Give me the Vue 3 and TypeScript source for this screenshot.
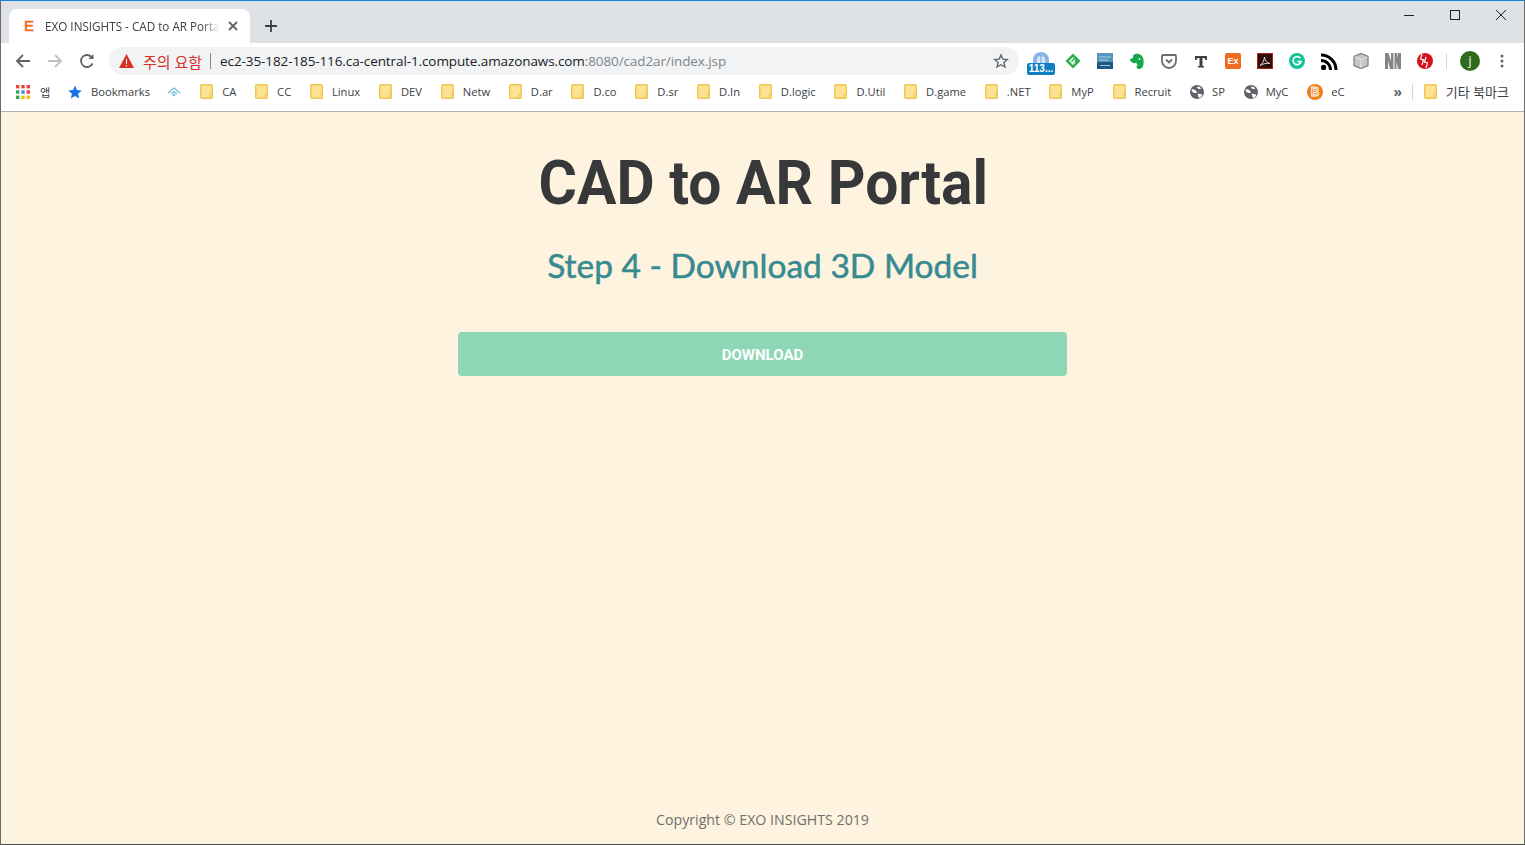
<template>
  <div class="window">
    <div class="tabstrip">
      <div class="tab">
        <span class="favicon">E</span>
        <span class="tab-title">EXO INSIGHTS - CAD to AR Porta</span>
        <svg class="tab-close" width="10" height="10" viewBox="0 0 10 10"><path d="M1 1l8 8M9 1l-8 8" stroke="#5f6368" stroke-width="1.8" /></svg>
      </div>
      <svg class="new-tab" width="12" height="12" viewBox="0 0 12 12"><path d="M6 0v12M0 6h12" stroke="#3c4043" stroke-width="1.8" /></svg>
      <div class="win-controls">
        <svg width="12" height="12" viewBox="0 0 12 12"><path d="M1 6.500h10" stroke="#222" /></svg>
        <svg width="12" height="12" viewBox="0 0 12 12"><rect x="1.500" y="1.500" width="9" height="9" fill="none" stroke="#222" /></svg>
        <svg width="12" height="12" viewBox="0 0 12 12"><path d="M1 1l10 10M11 1L1 11" stroke="#222" /></svg>
      </div>
    </div>

    <div class="toolbar">
      <svg class="nav" width="16" height="16" viewBox="0 0 16 16"><path d="M15 8H2M8 2L2 8l6 6" fill="none" stroke="#5f6368" stroke-width="1.8" /></svg>
      <svg class="nav" width="16" height="16" viewBox="0 0 16 16"><path d="M1 8h13M8 2l6 6-6 6" fill="none" stroke="#bdc1c6" stroke-width="1.8" /></svg>
      <svg class="nav" width="16" height="16" viewBox="0 0 16 16"><path d="M13.500 10.500A6 6 0 1 1 13 4.600" fill="none" stroke="#5f6368" stroke-width="1.8" /><path d="M14.500 1v5h-5z" fill="#5f6368" /></svg>
      <div class="omnibox">
        <svg width="15" height="14" viewBox="0 0 15 14"><path d="M7.500 0L15 14H0z" fill="#d93025" /><path d="M7 5h1v5H7zM7 11h1v1.400H7z" fill="#fff" /></svg>
        <span class="warn">주의 요함</span>
        <span class="omni-sep"></span>
        <span class="url">ec2-35-182-185-116.ca-central-1.compute.amazonaws.com<span class="url-dim">:8080/cad2ar/index.jsp</span></span>
        <svg class="star" width="16" height="16" viewBox="0 0 24 24"><path d="M12 3l2.700 6.200 6.800.6-5.100 4.500 1.500 6.700L12 17.500 6.100 21l1.500-6.700L2.500 9.800l6.800-.6z" fill="none" stroke="#5f6368" stroke-width="2" /></svg>
      </div>
      <div class="extensions">
        <div class="ext">
          <svg width="28" height="26" viewBox="0 0 28 26">
            <path d="M6 18V12a8 8 0 0 1 16 0v6z" fill="#8ab4e8" /><path d="M10 18v-6a4 4 0 0 1 8 0v6z" fill="#dce8f8" /><path d="M14 8v7" stroke="#6f9bd6" />
          </svg>
          <span class="badge">113...</span>
        </div>
        <div class="ext">
          <svg width="16" height="16" viewBox="0 0 16 16"><path d="M8 .5L15.500 8 8 15.500.5 8z" fill="#2bb24c" /><path d="M8.500 4.500L5 8l3.500 3.500M10 7L7.500 9.500M10 9.500L9 10.500" fill="none" stroke="#fff" stroke-width="1.400" /></svg>
        </div>
        <div class="ext">
          <svg width="16" height="16" viewBox="0 0 16 16"><rect width="16" height="16" fill="#5a93bd" /><rect y="9" width="16" height="7" fill="#1d5a88" /><path d="M2 4h12M2 7h9M3 12.500h10" stroke="#c4dcec" stroke-width=".8" /></svg>
        </div>
        <div class="ext">
          <svg width="16" height="17" viewBox="0 0 16 17"><path d="M1 6l3-1V2.500L6 1c2-.5 5 0 6.500 1.500C14.500 4.500 15 8 14.500 11c-.4 2.500-1.500 5-4.500 5-1.500 0-2.500-1-2.500-2.200 0-1.200 1-1.800 2-1.500-1.500-.5-2-1.500-2-2.800-1 1-3 1-4.500 0C2 8.500 1 7.500 1 6z" fill="#14a84a" /><circle cx="10.500" cy="6" r=".9" fill="#fff" /></svg>
        </div>
        <div class="ext">
          <svg width="16" height="16" viewBox="0 0 16 16"><path d="M2 2h12a1 1 0 0 1 1 1v5a7 7 0 0 1-14 0V3a1 1 0 0 1 1-1z" fill="none" stroke="#6e6e6e" stroke-width="1.800" /><path d="M5 6.500L8 9.500l3-3" fill="none" stroke="#6e6e6e" stroke-width="1.800" /></svg>
        </div>
        <div class="ext">
          <svg width="14" height="13" viewBox="0 0 14 13"><path d="M1 1h12v4h-1.500L10.500 3H8.500v8H10v1.500H4V11h1.500V3h-2L2.500 5H1z" fill="#3c4043" /></svg>
        </div>
        <div class="ext">
          <span class="ex-icon">Ex</span>
        </div>
        <div class="ext">
          <svg width="16" height="16" viewBox="0 0 16 16"><rect x=".5" y=".5" width="15" height="15" fill="#2a0f0c" stroke="#b5200f" /><path d="M3 12.500c2-1 4-4.500 4.500-8.500 .5 3.500 2 6 5.500 6.500-3-.5-6.500 0-10 2z" fill="none" stroke="#e9d5d2" /></svg>
        </div>
        <div class="ext">
          <svg width="16" height="16" viewBox="0 0 16 16"><circle cx="8" cy="8" r="8" fill="#15c39a" /><path d="M11.300 5.200A4 4 0 1 0 12 8.500H8.500" fill="none" stroke="#fff" stroke-width="1.600" /></svg>
        </div>
        <div class="ext">
          <svg width="17" height="17" viewBox="0 0 17 17"><circle cx="2.600" cy="14.400" r="2.600" /><path d="M0 7.500a9.500 9.500 0 0 1 9.500 9.500M0 2a15 15 0 0 1 15 15" fill="none" stroke="#000" stroke-width="3" /></svg>
        </div>
        <div class="ext">
          <svg width="16" height="16" viewBox="0 0 16 16"><path d="M8 .5L15 3.500v9L8 15.500 1 12.500v-9z" fill="#c6c6c6" stroke="#7a7a7a" stroke-width="1.200" /><path d="M1.500 4L8 6.500 14.500 4M8 6.500V15" fill="none" stroke="#e8e8e8" /></svg>
        </div>
        <div class="ext">
          <svg width="16" height="16" viewBox="0 0 16 16"><path d="M0 0h3.500L6 8V0h2.500v16H5L3 8v8H0zM9.500 0h2.500L13 5V0h3v16h-3l-1.500-7v7h-2z" fill="#868686" /></svg>
        </div>
        <div class="ext">
          <svg width="16" height="16" viewBox="0 0 16 16"><circle cx="8" cy="8" r="8" fill="#d3121c" /><path d="M5 1L3.500 6l3 1L5 12M9 4L7.500 9l3 1L9 15" fill="none" stroke="#fff" stroke-width="1.200" /></svg>
        </div>
        <span class="ext-sep"></span>
        <span class="avatar">j</span>
        <svg class="menu" width="4" height="14" viewBox="0 0 4 14"><circle cx="2" cy="2" r="1.500" fill="#5f6368" /><circle cx="2" cy="7" r="1.500" fill="#5f6368" /><circle cx="2" cy="12" r="1.500" fill="#5f6368" /></svg>
      </div>
    </div>

    <div class="bookmarks">
      <svg class="apps" width="14" height="14" viewBox="0 0 14 14">
        <rect v-for="dot in appDots" :key="dot.x + '-' + dot.y" :x="dot.x" :y="dot.y" width="3.400" height="3.400" :fill="dot.color" />
      </svg>
      <span class="bm-text apps-label">앱</span>
      <svg class="bm-star" width="14" height="14" viewBox="0 0 24 24"><path d="M12 1l3.300 7.700 8.300.7-6.300 5.500 1.900 8.100L12 18.700 4.800 23l1.900-8.100L.4 9.400l8.300-.7z" fill="#1a73e8" /></svg>
      <span class="bm-text bm-named">Bookmarks</span>
      <svg class="bm-cloud" width="14" height="10" viewBox="0 0 14 10"><path d="M1 6l6-5 6 5M4 7l3-2.500L10 7" fill="none" stroke="#6db9d6" stroke-width="1.300" /><circle cx="7" cy="8" r="1.300" fill="#6db9d6" /></svg>
      <div class="bm-item" v-for="bm in bookmarks" :key="bm.label">
        <svg v-if="bm.icon === 'folder'" width="14" height="15" viewBox="0 0 14 15"><rect x=".75" y=".75" width="11.500" height="13.500" rx="1" fill="#fde293" stroke="#efc74e" stroke-width="1.500" /><rect x="10" y="11" width="2.500" height="3" fill="#fde293" stroke="#efc74e" /></svg>
        <svg v-else-if="bm.icon === 'globe'" width="14" height="14" viewBox="0 0 14 14"><circle cx="7" cy="7" r="7" fill="#5f6368" /><path d="M1.500 4.500C4 3.500 6 5 7 7.500 5.500 8.500 3.500 8 2 6.500zM7.500 9c2-.5 3.500 0 5 1-1 1.500-2 2.500-3.500 3zM7.500 1.500c1.500 0 3 .8 4 2-1.500.8-3 .5-4.500-.5z" fill="#fff" /></svg>
        <span v-else class="coin">B</span>
        <span class="bm-text">{{ bm.label }}</span>
      </div>
      <span class="chevrons">»</span>
      <span class="bm-sep"></span>
      <div class="bm-item other">
        <svg width="14" height="15" viewBox="0 0 14 15"><rect x=".75" y=".75" width="11.500" height="13.500" rx="1" fill="#fde293" stroke="#efc74e" stroke-width="1.500" /><rect x="10" y="11" width="2.500" height="3" fill="#fde293" stroke="#efc74e" /></svg>
        <span class="bm-text other-label">기타 북마크</span>
      </div>
    </div>

    <main class="page">
      <h1 class="title">CAD to AR Portal</h1>
      <h2 class="subtitle">Step 4 - Download 3D Model</h2>
      <button class="download">DOWNLOAD</button>
      <footer class="copyright">Copyright © EXO INSIGHTS 2019</footer>
    </main>
  </div>
</template>

<script setup lang="ts">
type BookmarkIcon = "folder" | "globe" | "coin";

interface Bookmark {
  label: string;
  icon: BookmarkIcon;
}

const folders = ["CA", "CC", "Linux", "DEV", "Netw", "D.ar", "D.co", "D.sr", "D.In", "D.logic", "D.Util", "D.game", ".NET", "MyP", "Recruit"];

const bookmarks: Bookmark[] = [
  ...folders.map((label): Bookmark => ({ label, icon: "folder" })),
  { label: "SP", icon: "globe" },
  { label: "MyC", icon: "globe" },
  { label: "eC", icon: "coin" },
];

const dotColors = ["#ea4335", "#ea4335", "#ea4335", "#34a853", "#4285f4", "#ea4335", "#34a853", "#fbbc04", "#fbbc04"];
const appDots = dotColors.map((color, i) => ({
  x: (i % 3) * 5.3,
  y: Math.floor(i / 3) * 5.3,
  color,
}));
</script>

<style>
html,
body {
  margin: 0;
  height: 100%;
  overflow: hidden;
}
</style>

<style scoped>
.window {
  height: 845px;
  box-sizing: border-box;
  display: flex;
  flex-direction: column;
  border: 1px solid #6b6b6b;
  border-top: 1px solid #1583d8;
  border-bottom-color: #4a4a4a;
  font-family: "Open Sans", "Noto Sans CJK KR", sans-serif;
  overflow: hidden;
}

/* タブ */
.tabstrip {
  height: 42px;
  flex: none;
  display: flex;
  align-items: flex-end;
  background: #dee1e6;
  padding-left: 8px;
}

.tab {
  width: 241px;
  height: 34px;
  box-sizing: border-box;
  display: flex;
  align-items: center;
  padding: 0 12px 1px 15px;
  background: #fff;
  border-radius: 8px 8px 0 0;
}

.favicon {
  width: 21px;
  flex: none;
  font: 15px "Liberation Sans", sans-serif;
  -webkit-text-stroke: 0.6px #f26a21;
  color: #f26a21;
}

.tab-title {
  flex: 1;
  white-space: nowrap;
  font-size: 11.7px;
  color: #3c4043;
  -webkit-mask-image: linear-gradient(to right, #000 90%, transparent);
  mask-image: linear-gradient(to right, #000 90%, transparent);
}

.tab-close {
  margin-left: 8px;
  flex: none;
}

.new-tab {
  margin: 0 0 11px 15px;
}

.win-controls {
  margin-left: auto;
  align-self: flex-start;
  display: flex;
  gap: 34px;
  padding: 8px 17px 0 0;
}

/* ツールバー */
.toolbar {
  height: 34px;
  flex: none;
  box-sizing: border-box;
  display: flex;
  align-items: center;
  background: #fff;
  padding: 2px 0 0 14px;
}

.nav {
  flex: none;
  margin-right: 16px;
}

.omnibox {
  width: 910px;
  height: 28px;
  flex: none;
  box-sizing: border-box;
  margin-left: -2px;
  display: flex;
  align-items: center;
  padding: 0 10px;
  background: #f1f3f4;
  border-radius: 14px;
}

.warn {
  margin-left: 9px;
  font-size: 15px;
  color: #d93025;
}

.omni-sep {
  width: 1px;
  height: 16px;
  margin: 0 9px 0 8px;
  background: #80868b;
}

.url {
  font-size: 13.5px;
  letter-spacing: -0.1px;
  color: #202124;
  white-space: nowrap;
}

.url-dim {
  color: #80868b;
}

.star {
  margin-left: auto;
}

.extensions {
  display: flex;
  align-items: center;
  margin-left: 6px;
}

.ext {
  width: 32px;
  height: 28px;
  position: relative;
  display: flex;
  align-items: center;
  justify-content: center;
}

.badge {
  position: absolute;
  left: 2px;
  bottom: 0;
  width: 28px;
  height: 12px;
  text-align: center;
  border-radius: 2px;
  background: #0f7ec2;
  color: #fff;
  font: bold 10px/12px "Liberation Sans", sans-serif;
}

.ex-icon {
  width: 16px;
  height: 16px;
  border-radius: 2px;
  background: #f26a21;
  color: #fff;
  text-align: center;
  font: bold 9px/16px "Liberation Sans", sans-serif;
}

.ext-sep {
  width: 1px;
  height: 16px;
  margin: 0 13px 0 5px;
  background: #d3d5d8;
}

.avatar {
  width: 20px;
  height: 20px;
  border-radius: 50%;
  background: #2e6b1f;
  color: #fff;
  text-align: center;
  font-size: 12px;
  line-height: 20px;
}

.menu {
  margin-left: 20px;
}

/* ブックマークバー */
.bookmarks {
  height: 35px;
  flex: none;
  box-sizing: border-box;
  display: flex;
  align-items: center;
  gap: 18.75px;
  padding: 0 0 5px 15px;
  background: #fff;
  border-bottom: 1px solid #b0b0b0;
}

.bm-item {
  display: flex;
  align-items: center;
  gap: 8px;
  flex: none;
}

.bm-text {
  font-size: 11.2px;
  color: #3c4043;
  white-space: nowrap;
}

.apps-label {
  margin-left: -8.75px;
}

.bm-star {
  margin-left: -1px;
}

.bm-named {
  margin-left: -9.75px;
}

.bm-cloud {
  margin-left: -2px;
  margin-right: 0.75px;
}

.other-label {
  font-size: 13px;
}

.coin {
  width: 16px;
  height: 16px;
  border-radius: 50%;
  background: #ef7d1a;
  color: #ef7d1a;
  -webkit-text-stroke: 0.8px #fff;
  text-align: center;
  font: bold 12px/16px "Liberation Sans", sans-serif;
}

.chevrons {
  margin-left: auto;
  margin-right: -9px;
  font-size: 14px;
  font-weight: 700;
  color: #5f6368;
}

.bm-sep {
  width: 1px;
  height: 16px;
  background: #d3d5d8;
  margin-right: -7.75px;
}

.other {
  margin-right: 15px;
}

/* 本文 */
.page {
  flex: 1;
  display: flex;
  flex-direction: column;
  align-items: center;
  background: #fdf3de;
}

.title {
  margin: 36px 0 0 2px;
  font-family: "Roboto", sans-serif;
  font-weight: 700;
  font-size: 62px;
  line-height: 70px;
  white-space: nowrap;
  color: #37383a;
  transform: scaleX(0.947);
}

.subtitle {
  margin: 24px 0 0;
  font-family: "Lato", sans-serif;
  font-weight: 400;
  font-size: 33.5px;
  line-height: 46px;
  -webkit-text-stroke: 0.5px #368a90;
  color: #368a90;
}

.download {
  width: 609px;
  height: 44px;
  margin-top: 44px;
  padding-top: 3px;
  border: 0;
  border-radius: 4px;
  background: #8dd7b7;
  color: #fff;
  font-family: "Roboto", sans-serif;
  font-weight: 700;
  font-size: 15px;
}

.copyright {
  margin-top: auto;
  margin-bottom: 14px;
  font-family: "Open Sans", sans-serif;
  font-size: 14.2px;
  line-height: 20px;
  color: #6f6f6f;
}
</style>
